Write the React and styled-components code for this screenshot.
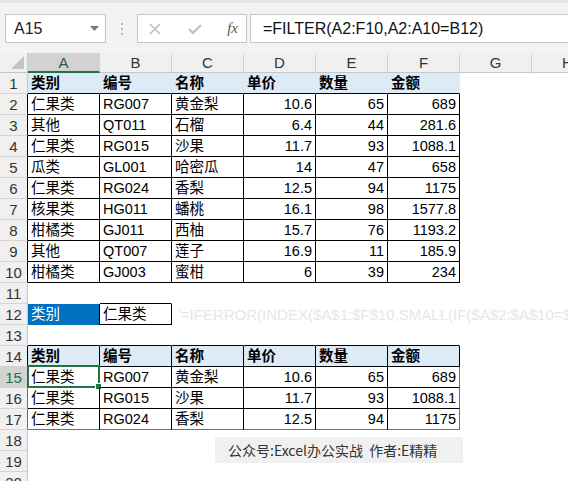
import React from "react";
import styled, { createGlobalStyle } from "styled-components";

const GlobalStyle = createGlobalStyle`
  html, body {
    margin: 0;
    padding: 0;
    background: #fff;
    overflow: hidden;
  }
  body {
    font-family: "Liberation Sans", "Noto Sans CJK SC", sans-serif;
  }
`;

const BLACK = "#000";
const BLUE = "#3a78d8";
const GREEN = "#217346";

const Page = styled.div`
  position: relative;
  width: 568px;
  height: 481px;
  overflow: hidden;
`;

const TopBar = styled.div`
  box-sizing: border-box;
  height: 53px;
  background: #f3f3f3;
  border-top: 3px solid #e4e4e4;
  padding: 11px 0 0 5px;
  display: flex;
  align-items: flex-start;
`;

const Box = styled.div`
  box-sizing: border-box;
  height: 29px;
  background: #fff;
  border: 1px solid #c6c6c6;
  display: flex;
  align-items: center;
`;

const NameBox = styled(Box)`
  width: 101px;
  padding: 0 6px 0 8px;
  justify-content: space-between;
  font-size: 16px;
  color: #222;
`;

const Dots = styled.div`
  width: 31px;
  height: 29px;
  display: flex;
  flex-direction: column;
  align-items: center;
  justify-content: center;
  gap: 3px;
  span {
    width: 2px;
    height: 2px;
    background: #b5b5b5;
  }
`;

const FxBox = styled(Box)`
  width: 110px;
  padding: 0 8px 0 10px;
  justify-content: space-between;
`;

const Fx = styled.span`
  font-family: "Liberation Serif", serif;
  font-style: italic;
  font-size: 15px;
  color: #555;
`;

const FormulaInput = styled(Box)`
  flex: 1;
  margin-left: 3px;
  border-right: none;
  padding-left: 12px;
  font-size: 16px;
  color: #111;
  white-space: nowrap;
`;

const Grid = styled.div`
  display: flex;
  flex-direction: column;
`;

const Row = styled.div`
  display: flex;
  height: ${(p) => (p.$head ? 20 : 21)}px;
`;

const Corner = styled.div`
  box-sizing: border-box;
  width: 28px;
  flex: none;
  background: #f0f0f0;
  border-right: 1px solid #c6c6c6;
  border-bottom: 1px solid #c6c6c6;
  display: flex;
  align-items: flex-end;
  justify-content: flex-end;
  padding: 0 3px 3px 0;
`;

const ColHead = styled.div`
  box-sizing: border-box;
  width: 72px;
  flex: none;
  background: ${(p) => (p.$active ? "#d2d2d2" : "#f0f0f0")};
  border-right: 1px solid #d4d4d4;
  border-bottom: ${(p) => (p.$active ? `2px solid ${GREEN}` : "1px solid #c6c6c6")};
  display: flex;
  align-items: center;
  justify-content: center;
  font-size: 15px;
  color: ${(p) => (p.$active ? "#1e5e3a" : "#333")};
`;

const RowHead = styled.div`
  box-sizing: border-box;
  width: 28px;
  flex: none;
  background: ${(p) => (p.$active ? "#d2d2d2" : "#f0f0f0")};
  border-right: 1px solid ${(p) => p.$br};
  border-bottom: 1px solid #d4d4d4;
  display: flex;
  align-items: center;
  justify-content: center;
  font-size: 15px;
  color: ${(p) => (p.$active ? GREEN : "#333")};
`;

const Cell = styled.div`
  position: relative;
  box-sizing: border-box;
  width: 72px;
  flex: none;
  display: flex;
  align-items: flex-end;
  justify-content: ${(p) => (p.$align === "right" ? "flex-end" : "flex-start")};
  padding: 0 3px 1px 3px;
  border-right: 1px solid ${(p) => p.$br};
  border-bottom: 1px solid ${(p) => p.$bb};
  background: ${(p) => p.$fill || "transparent"};
  color: ${(p) => p.$color || "#000"};
  font-weight: ${(p) => (p.$bold ? 700 : 400)};
  font-size: 14.5px;
  line-height: 17px;
  white-space: nowrap;
`;

const Faint = styled.span`
  color: #e6e6e6;
  font-size: 15px;
  padding-left: 3px;
`;

const Selection = styled.div`
  position: absolute;
  top: -2px;
  left: -1px;
  right: -1px;
  bottom: -1px;
  border: 2px solid ${GREEN};
  pointer-events: none;
  &::after {
    content: "";
    position: absolute;
    right: -4px;
    bottom: -4px;
    width: 5px;
    height: 5px;
    background: ${GREEN};
    border: 1px solid #fff;
  }
`;

const Watermark = styled.div`
  position: absolute;
  left: 215px;
  top: 437px;
  width: 248px;
  height: 26px;
  box-sizing: border-box;
  background: #f0f0f0;
  padding-left: 13px;
  display: flex;
  align-items: center;
  font-family: "Noto Sans CJK SC", sans-serif;
  font-size: 14px;
  color: #333;
  white-space: pre;
`;

const header = ["类别", "编号", "名称", "单价", "数量", "金额"];
const source = [
  ["仁果类", "RG007", "黄金梨", 10.6, 65, 689],
  ["其他", "QT011", "石榴", 6.4, 44, 281.6],
  ["仁果类", "RG015", "沙果", 11.7, 93, 1088.1],
  ["瓜类", "GL001", "哈密瓜", 14, 47, 658],
  ["仁果类", "RG024", "香梨", 12.5, 94, 1175],
  ["核果类", "HG011", "蟠桃", 16.1, 98, 1577.8],
  ["柑橘类", "GJ011", "西柚", 15.7, 76, 1193.2],
  ["其他", "QT007", "莲子", 16.9, 11, 185.9],
  ["柑橘类", "GJ003", "蜜柑", 6, 39, 234],
];
const result = [source[0], source[2], source[4]];
const formula =
  "'=IFERROR(INDEX($A$1:$F$10,SMALL(IF($A$2:$A$10=$B$12,ROW($A$2:$A$10)),ROW(A1))),\"\")";

const cols = ["A", "B", "C", "D", "E", "F", "G", "H"];

// border boxes: rows r1..r2, cols c1..c2 (1 = A)
const boxes = [
  { r1: 2, r2: 10, c1: 1, c2: 6, color: BLACK, inner: true },
  { r1: 12, r2: 12, c1: 2, c2: 2, color: BLACK, inner: true },
  { r1: 14, r2: 17, c1: 1, c2: 6, color: BLACK, inner: true },
  { r1: 15, r2: 17, c1: 1, c2: 6, color: BLUE, inner: false },
];

const rightColor = (r, c, fallback) => {
  let col = fallback;
  boxes.forEach((b) => {
    if (r < b.r1 || r > b.r2) return;
    if (c === b.c1 - 1 || c === b.c2) col = b.color;
    else if (b.inner && c >= b.c1 && c < b.c2) col = b.color;
  });
  return col;
};

const bottomColor = (r, c) => {
  let col = "transparent";
  boxes.forEach((b) => {
    if (c < b.c1 || c > b.c2) return;
    if (b.inner ? r >= b.r1 - 1 && r <= b.r2 : r === b.r2) col = b.color;
    else if (!b.inner && r === b.r1 - 1) return;
  });
  return col;
};

const fmt = (v) => ({ text: String(v), align: typeof v === "number" ? "right" : "left" });

const cellsFor = (r) => {
  if (r === 1 || r === 14) return header.map((t) => ({ text: t, bold: true, fill: "#ddebf7" }));
  if (r >= 2 && r <= 10) return source[r - 2].map(fmt);
  if (r === 12)
    return [
      { text: "类别", fill: "#0070c0", color: "#fff" },
      { text: "仁果类" },
      { faint: formula },
    ];
  if (r >= 15 && r <= 17) return result[r - 15].map(fmt);
  return [];
};

const Cross = () => (
  <svg width="14" height="14" viewBox="0 0 14 14">
    <path d="M2 2 L12 12 M12 2 L2 12" stroke="#bdbdbd" strokeWidth="1.6" fill="none" />
  </svg>
);

const Check = () => (
  <svg width="16" height="14" viewBox="0 0 16 14">
    <path d="M2 7 L6 11 L14 3" stroke="#bdbdbd" strokeWidth="2" fill="none" />
  </svg>
);

const Caret = () => (
  <svg width="9" height="5" viewBox="0 0 9 5">
    <path d="M0 0 H9 L4.5 5 Z" fill="#777" />
  </svg>
);

const CornerMark = () => (
  <svg width="13" height="13" viewBox="0 0 13 13">
    <path d="M13 0 V13 H0 Z" fill="#c4c4c4" />
  </svg>
);

export default function App() {
  const rows = Array.from({ length: 20 }, (_, i) => i + 1);
  return (
    <Page>
      <GlobalStyle />
      <TopBar>
        <NameBox>
          A15
          <Caret />
        </NameBox>
        <Dots>
          <span />
          <span />
          <span />
        </Dots>
        <FxBox>
          <Cross />
          <Check />
          <Fx>fx</Fx>
        </FxBox>
        <FormulaInput>=FILTER(A2:F10,A2:A10=B12)</FormulaInput>
      </TopBar>
      <Grid>
        <Row $head>
          <Corner>
            <CornerMark />
          </Corner>
          {cols.map((c) => (
            <ColHead key={c} $active={c === "A"}>
              {c}
            </ColHead>
          ))}
        </Row>
        {rows.map((r) => {
          const cells = cellsFor(r);
          return (
            <Row key={r}>
              <RowHead $active={r === 15} $br={r === 15 ? GREEN : rightColor(r, 0, "#c6c6c6")}>
                {r}
              </RowHead>
              {cols.map((c, i) => {
                const cell = cells[i] || {};
                return (
                  <Cell
                    key={c}
                    $align={cell.align}
                    $fill={cell.fill}
                    $color={cell.color}
                    $bold={cell.bold}
                    $br={rightColor(r, i + 1, "transparent")}
                    $bb={bottomColor(r, i + 1)}
                  >
                    {cell.text}
                    {cell.faint && <Faint>{cell.faint}</Faint>}
                    {r === 15 && i === 0 && <Selection />}
                  </Cell>
                );
              })}
            </Row>
          );
        })}
      </Grid>
      <Watermark>公众号:Excel办公实战  作者:E精精</Watermark>
    </Page>
  );
}
